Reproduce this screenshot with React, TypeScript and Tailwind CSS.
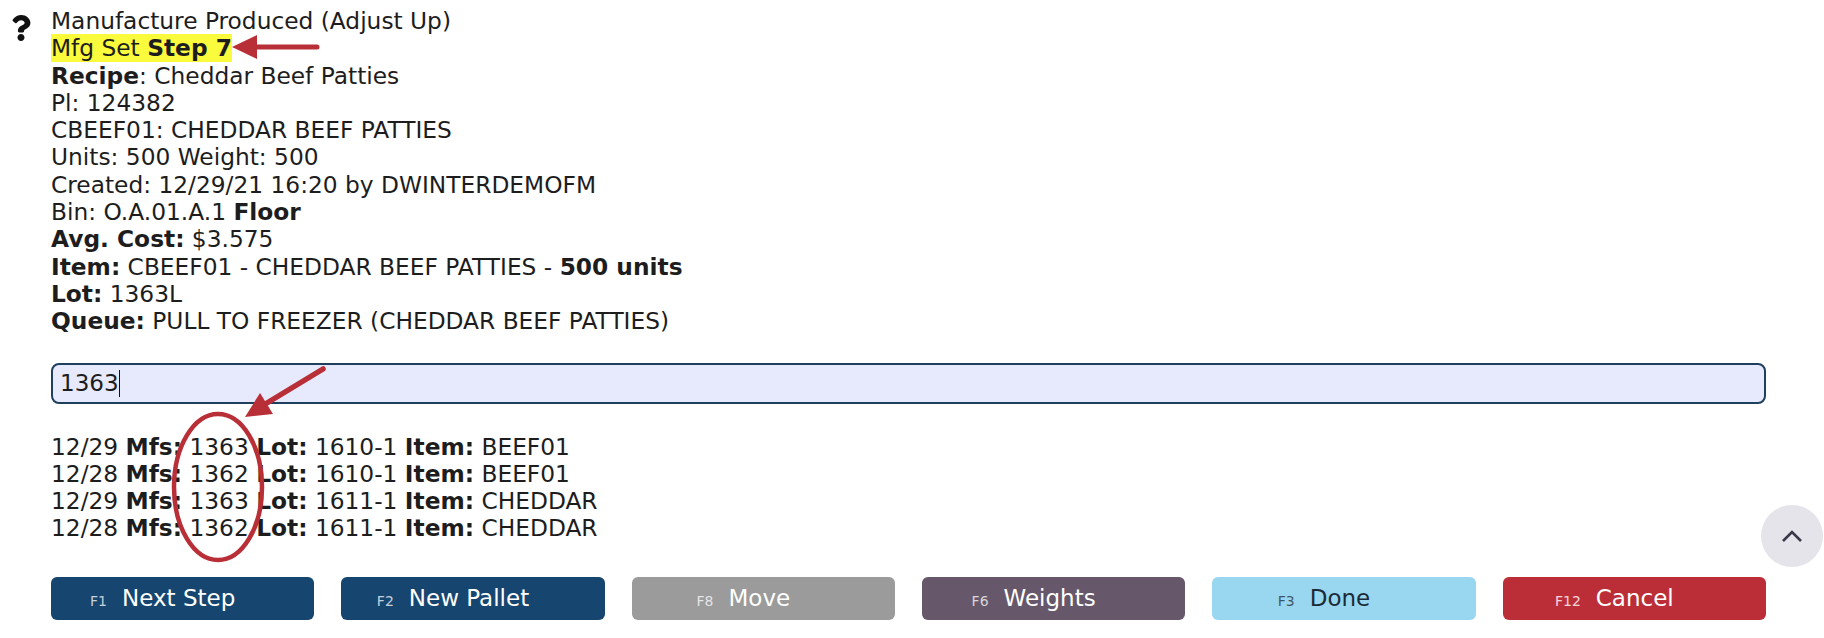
import React from 'react';
import { FaQuestion } from 'react-icons/fa';

const buttons = [
  { key: 'F1', label: 'Next Step', cls: 'bg-[#16466f] text-white', keyCls: 'text-white/75' },
  { key: 'F2', label: 'New Pallet', cls: 'bg-[#16466f] text-white', keyCls: 'text-white/75' },
  { key: 'F8', label: 'Move', cls: 'bg-[#9b9b9b] text-white', keyCls: 'text-white/75' },
  { key: 'F6', label: 'Weights', cls: 'bg-[#67576a] text-white', keyCls: 'text-white/75' },
  { key: 'F3', label: 'Done', cls: 'bg-[#98d7ef] text-[#1c2a38]', keyCls: 'text-[#1c2a38]/75' },
  { key: 'F12', label: 'Cancel', cls: 'bg-[#bc2e37] text-white', keyCls: 'text-white/80' },
];

const rows = [
  { date: '12/29', mfs: '1363', lot: '1610-1', item: 'BEEF01' },
  { date: '12/28', mfs: '1362', lot: '1610-1', item: 'BEEF01' },
  { date: '12/29', mfs: '1363', lot: '1611-1', item: 'CHEDDAR' },
  { date: '12/28', mfs: '1362', lot: '1611-1', item: 'CHEDDAR' },
];

const App = () => {
  return (
    <div className="relative h-[638px] w-full overflow-hidden bg-white font-['DejaVu_Sans',sans-serif] text-[#1d1d1d]">
      <div className="flex">
        {/* help icon */}
        <div className="w-[51px] shrink-0 pl-[8px] pt-[15px]">
          <FaQuestion className="text-[#111] text-[26px]" />
        </div>

        <div className="flex-1 pr-[58px] pt-[7px]">
          <div className="text-[23.3px] leading-[27.3px]">
            <div>Manufacture Produced (Adjust Up)</div>
            <div>
              <span className="inline-block bg-[#fbfb3d]">
                Mfg Set <b>Step 7</b>
              </span>
            </div>
            <div>
              <b>Recipe</b>: Cheddar Beef Patties
            </div>
            <div>Pl: 124382</div>
            <div>CBEEF01: CHEDDAR BEEF PATTIES</div>
            <div>Units: 500 Weight: 500</div>
            <div>Created: 12/29/21 16:20 by DWINTERDEMOFM</div>
            <div>
              Bin: O.A.01.A.1 <b>Floor</b>
            </div>
            <div>
              <b>Avg. Cost:</b> $3.575
            </div>
            <div>
              <b>Item:</b> CBEEF01 - CHEDDAR BEEF PATTIES - <b>500 units</b>
            </div>
            <div>
              <b>Lot:</b> 1363L
            </div>
            <div>
              <b>Queue:</b> PULL TO FREEZER (CHEDDAR BEEF PATTIES)
            </div>
          </div>

          {/* scan input */}
          <div className="mt-[28px] flex h-[41px] items-center rounded-[8px] border-2 border-[#1f3f5f] bg-[#e7eafc] pl-[7px] text-[23px]">
            <span>1363</span>
            <span className="inline-block h-[27px] w-px bg-[#111]" />
          </div>

          {/* results */}
          <div className="mt-[29px] text-[23.3px] leading-[27.3px]">
            {rows.map((r, i) => (
              <div key={i}>
                {r.date} <b>Mfs:</b> {r.mfs} <b>Lot:</b> {r.lot} <b>Item:</b> {r.item}
              </div>
            ))}
          </div>

          {/* function keys */}
          <div className="mt-[35px] grid grid-cols-6 gap-[27px]">
            {buttons.map((b) => (
              <div
                key={b.key}
                className={`flex h-[43px] items-baseline justify-center rounded-[6px] pr-[40px] pt-[8px] ${b.cls}`}
              >
                <span className={`text-[14px] ${b.keyCls}`}>{b.key}</span>
                <span className="ml-[15px] text-[23px] leading-[26px]">{b.label}</span>
              </div>
            ))}
          </div>
        </div>
      </div>

      {/* annotations */}
      <svg
        className="pointer-events-none absolute left-0 top-0"
        width="1824"
        height="638"
        viewBox="0 0 1824 638"
      >
        <line x1="317" y1="47" x2="250" y2="47" stroke="#b92f37" strokeWidth="5" strokeLinecap="round" />
        <polygon points="232,47 257,35 257,59" fill="#b92f37" />
        <line x1="323" y1="369" x2="262" y2="406" stroke="#b92f37" strokeWidth="5.5" strokeLinecap="round" />
        <polygon points="245,417 260,393 273,414" fill="#b92f37" />
        <ellipse cx="218" cy="487" rx="44" ry="73" fill="none" stroke="#b92f37" strokeWidth="4.5" />
      </svg>

      {/* scroll to top */}
      <div className="absolute bottom-[71px] right-[1px] flex h-[62px] w-[62px] items-center justify-center rounded-full bg-[#e4e4ea]">
        <svg width="22" height="14" viewBox="0 0 22 14">
          <polyline points="2,12 11,3 20,12" fill="none" stroke="#3a3848" strokeWidth="2.6" />
        </svg>
      </div>
    </div>
  );
};

export default App;
